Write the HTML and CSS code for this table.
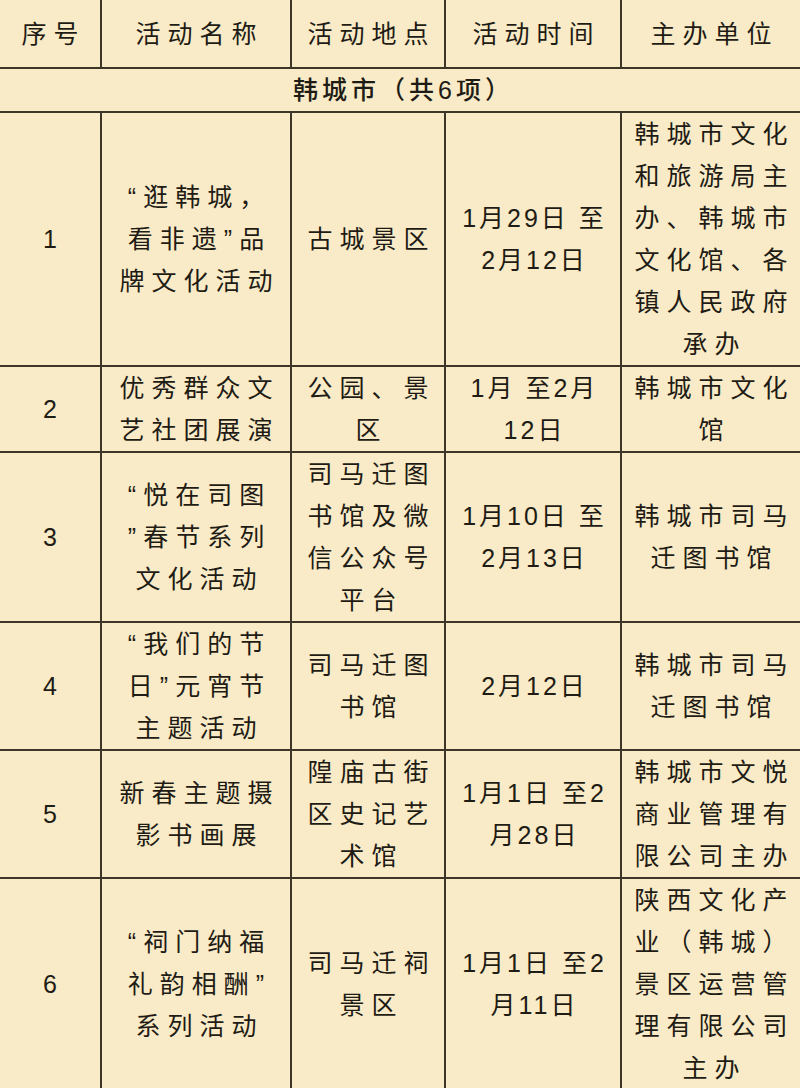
FILE: index.html
```html
<!DOCTYPE html>
<html lang="zh-CN">
<head>
<meta charset="utf-8">
<title>韩城市活动</title>
<link rel="stylesheet" href="styles.css">
</head>
<body>
<table class="events">
  <colgroup>
    <col class="c-no">
    <col class="c-name">
    <col class="c-place">
    <col class="c-time">
    <col class="c-org">
  </colgroup>
  <thead>
    <tr class="head">
      <th>序号</th>
      <th>活动名称</th>
      <th>活动地点</th>
      <th>活动时间</th>
      <th>主办单位</th>
    </tr>
  </thead>
  <tbody>
    <tr class="section">
      <td colspan="5">韩城市（共6项）</td>
    </tr>
    <tr>
      <td class="num">1</td>
      <td>“逛韩城，<br>看非遗”品<br>牌文化活动</td>
      <td>古城景区</td>
      <td class="date">1月29日 至<br>2月12日</td>
      <td>韩城市文化<br>和旅游局主<br>办、韩城市<br>文化馆、各<br>镇人民政府<br>承办</td>
    </tr>
    <tr>
      <td class="num">2</td>
      <td>优秀群众文<br>艺社团展演</td>
      <td>公园、景<br>区</td>
      <td class="date">1月 至2月<br>12日</td>
      <td>韩城市文化<br>馆</td>
    </tr>
    <tr>
      <td class="num">3</td>
      <td>“悦在司图<br>”春节系列<br>文化活动</td>
      <td>司马迁图<br>书馆及微<br>信公众号<br>平台</td>
      <td class="date">1月10日 至<br>2月13日</td>
      <td>韩城市司马<br>迁图书馆</td>
    </tr>
    <tr>
      <td class="num">4</td>
      <td>“我们的节<br>日”元宵节<br>主题活动</td>
      <td>司马迁图<br>书馆</td>
      <td class="date">2月12日</td>
      <td>韩城市司马<br>迁图书馆</td>
    </tr>
    <tr>
      <td class="num">5</td>
      <td>新春主题摄<br>影书画展</td>
      <td>隍庙古街<br>区史记艺<br>术馆</td>
      <td class="date">1月1日 至2<br>月28日</td>
      <td>韩城市文悦<br>商业管理有<br>限公司主办</td>
    </tr>
    <tr>
      <td class="num">6</td>
      <td>“祠门纳福<br>礼韵相酬”<br>系列活动</td>
      <td>司马迁祠<br>景区</td>
      <td class="date">1月1日 至2<br>月11日</td>
      <td>陕西文化产<br>业（韩城）<br>景区运营管<br>理有限公司<br>主办</td>
    </tr>
  </tbody>
</table>
</body>
</html>
```

FILE: styles.css
```css
html, body {
  margin: 0;
  padding: 0;
  background: #f9ebc7;
}

body {
  width: 800px;
  height: 1088px;
  overflow: hidden;
}

.events {
  width: 800px;
  table-layout: fixed;
  border-collapse: collapse;
  border-style: hidden;
  font-family: "Liberation Sans", "Noto Sans CJK SC", sans-serif;
  font-size: 25px;
  color: #1f1b15;
}

.c-no { width: 101px; }
.c-name { width: 190px; }
.c-place { width: 154px; }
.c-time { width: 176px; }
.c-org { width: 179px; }

.events th,
.events td {
  border: 2px solid #3d3528;
  padding: 0 0 0 7px;
  text-align: center;
  vertical-align: middle;
  line-height: 42px;
  letter-spacing: 7px;
  font-weight: 400;
}

.head th {
  height: 67px;
  padding-top: 0;
  padding-bottom: 0;
}

.section td {
  letter-spacing: 4px;
  font-weight: 500;
}

.events td.num {
  letter-spacing: 0;
  padding-left: 0;
}

.events td.date {
  letter-spacing: 3px;
  padding-left: 3px;
}
```
